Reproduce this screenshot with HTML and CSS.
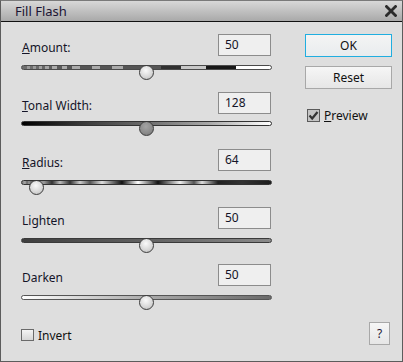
FILE: index.html
```html
<!DOCTYPE html>
<html lang="en">
<head>
    <meta charset="UTF-8">
    <title>Fill Flash</title>
    <link rel="stylesheet" href="styles.css">
</head>
<body>
<div class="dialog">
    <div class="titlebar">
        <span class="title">Fill Flash</span>
        <svg class="close" width="12" height="12" viewBox="0 0 12 12">
            <path d="M1.5 1.5 L10.5 10.5 M10.5 1.5 L1.5 10.5" stroke="#2b2b2b" stroke-width="2.8" stroke-linecap="square"/>
        </svg>
    </div>

    <div class="content">
        <div class="controls">
            <div class="row">
                <div class="row-head">
                    <label class="label"><u>A</u>mount:</label>
                    <div class="value">50</div>
                </div>
                <div class="slider">
                    <div class="track track-amount"></div>
                    <div class="thumb" style="left: 118px"></div>
                </div>
            </div>

            <div class="row">
                <div class="row-head">
                    <label class="label"><u>T</u>onal Width:</label>
                    <div class="value">128</div>
                </div>
                <div class="slider slider-up">
                    <div class="track track-tonal"></div>
                    <div class="thumb thumb-dark" style="left: 118px"></div>
                </div>
            </div>

            <div class="row">
                <div class="row-head">
                    <label class="label"><u>R</u>adius:</label>
                    <div class="value">64</div>
                </div>
                <div class="slider">
                    <div class="track track-radius"></div>
                    <div class="thumb" style="left: 8px"></div>
                </div>
            </div>

            <div class="row">
                <div class="row-head">
                    <label class="label">Lighten</label>
                    <div class="value">50</div>
                </div>
                <div class="slider">
                    <div class="track track-lighten"></div>
                    <div class="thumb" style="left: 118px"></div>
                </div>
            </div>

            <div class="row">
                <div class="row-head">
                    <label class="label">Darken</label>
                    <div class="value">50</div>
                </div>
                <div class="slider">
                    <div class="track track-darken"></div>
                    <div class="thumb" style="left: 118px"></div>
                </div>
            </div>
        </div>

        <div class="actions">
            <button class="btn btn-default">OK</button>
            <button class="btn">Reset</button>
            <div class="check check-preview">
                <svg width="13" height="13" viewBox="0 0 13 13">
                    <rect x="0.5" y="0.5" width="12" height="12" fill="#c4c4c4" stroke="#5a5a5a"/>
                    <path d="M2.5 6.5 L5.2 9.5 L10.5 3" fill="none" stroke="#333" stroke-width="2.2"/>
                </svg>
                <span><u>P</u>review</span>
            </div>
        </div>
    </div>

    <div class="footer">
        <div class="check">
            <span class="box"></span>
            <span>Invert</span>
        </div>
        <button class="btn btn-help">?</button>
    </div>
</div>
</body>
</html>
```

FILE: styles.css
```css
:root {
    --bg: #dedede;
    --frame: #5c5c5c;
    --text: #141428;
    --field-border: #8c8c8c;
}

body {
    margin: 0;
    font-family: "Noto Sans", "Open Sans", sans-serif;
    font-size: 12px;
    color: var(--text);
    background: var(--bg);
}

.dialog {
    width: 403px;
    height: 362px;
    box-sizing: border-box;
    border: 1px solid var(--frame);
    border-top-color: #7a7a7a;
    background: var(--bg);
}

.titlebar {
    height: 20px;
    border-bottom: 1px solid #111;
    background: linear-gradient(#d8d8d8, #a9a9a9);
    display: flex;
    align-items: center;
    justify-content: space-between;
    padding: 0 5px 0 14px;
}

.title {
    font-size: 13px;
    color: #1c1434;
}

.content {
    display: flex;
    padding: 12px 8px 0 20px;
}

.controls {
    width: 251px;
}

.row {
    height: 57.5px;
}

.row-head {
    display: flex;
    justify-content: space-between;
    align-items: center;
    height: 22px;
}

.label {
    padding-left: 1px;
    padding-top: 5px;
}

.value {
    width: 45px;
    height: 20px;
    line-height: 19px;
    padding-left: 6px;
    border: 1px solid var(--field-border);
    background: #efefef;
    margin-right: 1px;
}

.slider {
    position: relative;
    height: 15px;
    margin-top: 9px;
}

.slider-up {
    margin-top: 7px;
}

.track {
    height: 3px;
    margin-top: 5px;
    border: 1px solid #4a4a4a;
    border-radius: 3px;
}

.track-amount {
    background: linear-gradient(to right,
        #6e6e6e 0, #6e6e6e 5px, #9a9a9a 5px, #9a9a9a 8px, #6e6e6e 8px, #6e6e6e 11px,
        #9a9a9a 11px, #9a9a9a 14px, #6a6a6a 14px, #6a6a6a 17px, #a0a0a0 17px, #a0a0a0 20px,
        #666 20px, #666 23px, #a4a4a4 23px, #a4a4a4 27px, #5e5e5e 27px, #5e5e5e 30px,
        #aaa 30px, #aaa 35px, #5a5a5a 35px, #5a5a5a 40px, #aaa 40px, #aaa 45px,
        #565656 45px, #565656 50px, #aaa 50px, #aaa 58px, #555 58px, #555 70px,
        #aaa 70px, #aaa 78px, #555 78px, #555 90px, #aaa 90px, #aaa 101px,
        #555 101px, #555 139px, #303030 139px, #303030 159px, #c8c8c8 159px, #c8c8c8 184px,
        #181818 184px, #181818 214px, #fff 214px);
}

.track-tonal {
    border-color: #333;
    background: linear-gradient(to right, #000, #3a3a3a 25%, #6c6c6c 50%, #a8a8a8 75%, #f4f4f4 96%, #fff);
}

.track-radius {
    border-color: #333;
    background: linear-gradient(to right,
        #777 0, #aaa 3px, #666 5px, #999 7px, #666 9px, #888 14px,
        #999 22px, #333 30px, #bbb 38px, #333 48px, #ccc 58px, #555 68px,
        #ddd 80px, #111 100px, #fff 116px, #111 136px, #eee 158px, #555 172px,
        #ddd 180px, #222 196px, #333 220px, #1c1c1c 249px);
}

.track-lighten {
    border-color: #3a3a3a;
    background: linear-gradient(to right, #3e3e3e, #616161 50%, #8a8a8a);
}

.track-darken {
    border-color: #555;
    background: linear-gradient(to right, #fff, #aaa 50%, #6a6a6a);
}

.thumb {
    position: absolute;
    top: 0;
    width: 13px;
    height: 13px;
    border: 1px solid #3c3c3c;
    border-radius: 50%;
    background: radial-gradient(circle at 45% 35%, #fafafa, #d6d6d6 60%, #b4b4b4);
}

.thumb-dark {
    background: radial-gradient(circle at 45% 35%, #a4a4a4, #8a8a8a 60%, #6e6e6e);
}

.actions {
    margin-left: 33px;
    width: 87px;
    display: flex;
    flex-direction: column;
}

.btn {
    font-family: inherit;
    font-size: 12px;
    color: #111;
    height: 23px;
    border: 1px solid #a8a8a8;
    background: linear-gradient(#f6f6f6, #e6e6e6);
    padding: 0;
    margin-bottom: 9px;
}

.btn-default {
    border-color: #20aee0;
    background: linear-gradient(#f4f4f4, #e8ecee);
}

.check {
    display: flex;
    align-items: center;
    gap: 4px;
    color: #111;
}

.check-preview {
    margin-top: 9px;
    margin-left: 2px;
}

.box {
    width: 11px;
    height: 10px;
    border: 1px solid #6a6a6a;
    background: linear-gradient(#f4f4f4, #d6d6d6);
}

.footer {
    display: flex;
    justify-content: space-between;
    align-items: flex-end;
    padding: 0 12px 0 20px;
}

.footer .check {
    margin-bottom: 1px;
}

.btn-help {
    width: 21px;
    margin-bottom: 0;
    color: #1c1434;
}
```
